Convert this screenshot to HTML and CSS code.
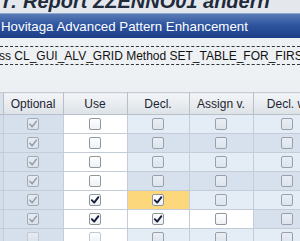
FILE: index.html
```html
<!DOCTYPE html>
<html>
<head>
    <title>Hovitaga Advanced Pattern Enhancement</title>
    <link rel="stylesheet" href="styles.css">
</head>
<body>
    <div class="window-title"><span>r: Report ZZENNO01 ändern</span></div>
    <div class="dialog-title">Hovitaga Advanced Pattern Enhancement</div>
    <div class="pattern-bar">
        <div class="pattern-field">ss CL_GUI_ALV_GRID Method SET_TABLE_FOR_FIRST_DISPLAY</div>
    </div>
    <div class="grid-area">
        <table class="grid">
            <colgroup>
                <col class="c-stub">
                <col class="c-opt">
                <col class="c-use">
                <col class="c-decl">
                <col class="c-assign">
                <col class="c-declw">
            </colgroup>
            <thead>
                <tr>
                    <th class="stub"></th>
                    <th>Optional</th>
                    <th>Use</th>
                    <th>Decl.</th>
                    <th>Assign v.</th>
                    <th>Decl. w</th>
                </tr>
            </thead>
            <tbody id="rows"></tbody>
        </table>
    </div>

    <script>
        // o = optional, u = use, d = decl., a = assign v., w = decl. w
        // 1 = checked; edit = white (editable) cells, focus = current cell
        const rows = [
            { o: 1, u: 0, d: 0, a: 0, w: 0 },
            { o: 1, u: 0, d: 0, a: 0, w: 0 },
            { o: 1, u: 0, d: 0, a: 0, w: 0 },
            { o: 1, u: 0, d: 0, a: 0, w: 0 },
            { o: 1, u: 1, d: 1, a: 0, w: 0, focus: "d" },
            { o: 1, u: 1, d: 1, a: 0, w: 0, edit: ["d", "a"] },
            { o: 0, u: 0, d: 0, a: 0, w: 0, faded: true }
        ];

        const check = '<svg viewBox="0 0 12 12" width="12" height="12"><path d="M2.8 6.2 L5.2 8.6 L9.4 3.2" fill="none" stroke-width="1.9" stroke-linecap="round" stroke-linejoin="round"/></svg>';

        function box(on, kind) {
            return '<span class="cb ' + kind + '">' + (on ? check : '') + '</span>';
        }

        const body = document.getElementById("rows");
        rows.forEach(function (r, i) {
            const tr = document.createElement("tr");
            tr.className = i % 2 ? "even" : "odd";
            const fade = r.faded ? " faded" : "";
            let html = '<td class="stub"></td>';
            html += '<td class="ro">' + box(r.o, "off" + fade) + '</td>';
            html += '<td class="edit">' + box(r.u, "on" + fade) + '</td>';
            ["d", "a", "w"].forEach(function (k) {
                let cls = "";
                if (r.focus === k) cls = "focus";
                else if (r.edit && r.edit.indexOf(k) > -1) cls = "edit";
                html += '<td class="' + cls + '">' + box(r[k], r[k] || cls ? "on" : "plain") + '</td>';
            });
            tr.innerHTML = html;
            body.appendChild(tr);
        });
    </script>
</body>
</html>
```

FILE: styles.css
```css
body {
    margin: 0;
    width: 300px;
    height: 241px;
    overflow: hidden;
    background-color: #e6ebf1;
    font-family: "Liberation Sans", Arial, sans-serif;
}

.window-title {
    height: 13px;
    background-color: #e4e8ed;
    overflow: hidden;
    white-space: nowrap;
}

.window-title span {
    display: block;
    margin-top: -9px;
    margin-left: 3px;
    font-size: 20px;
    font-weight: bold;
    font-style: italic;
    line-height: 21px;
    color: #1f2a3a;
}

.dialog-title {
    height: 25px;
    background: linear-gradient(#5a7cb6, #2f55a0 45%, #1c3e86);
    border-top: 1px solid #8fa6cf;
    box-sizing: border-box;
    color: #fff;
    font-size: 13.3px;
    line-height: 25px;
    padding-left: 1px;
    white-space: nowrap;
}

.pattern-bar {
    background-color: #eef1f4;
    padding: 8px 0 3px 0;
    height: 30px;
    box-sizing: border-box;
}

.pattern-field {
    border-top: 1px dashed #333;
    border-bottom: 1px dashed #333;
    height: 19px;
    box-sizing: border-box;
    padding-top: 2px;
    font-size: 12px;
    line-height: 15px;
    color: #111;
    white-space: nowrap;
    overflow: hidden;
    text-indent: -1px;
}

.grid-area {
    padding-top: 24px;
    background: linear-gradient(#eef1f4, #e3e8ee);
}

.grid {
    border-collapse: collapse;
    table-layout: fixed;
    width: 320px;
    font-size: 12px;
}

.c-stub { width: 3px; }
.c-opt { width: 60px; }
.c-use { width: 64px; }
.c-decl { width: 62px; }
.c-assign { width: 64px; }
.c-declw { width: 67px; }

.grid th {
    height: 21px;
    padding: 0;
    font-weight: normal;
    color: #1e2530;
    background: linear-gradient(#f3f5f7, #dde2e8);
    border: 1px solid #b6bfca;
    border-top-color: #c6cdd6;
    text-align: center;
    white-space: nowrap;
    overflow: hidden;
}

.grid th.stub {
    background: #d8e0ea;
    border-left: none;
}

.grid td {
    height: 18px;
    padding: 0;
    text-align: center;
    border: 1px solid #c3ccd7;
    line-height: 0;
}

.grid tr.odd td { background-color: #e4ecf5; }
.grid tr.even td { background-color: #d6e1ed; }

.grid td.stub {
    border-left: none;
    background-color: #d3dce8 !important;
}

.grid td.ro { background-color: #d5e0ec !important; }
.grid td.edit { background-color: #ffffff !important; }
.grid td.focus { background-color: #fdd77c !important; }

.cb {
    display: inline-block;
    width: 10px;
    height: 10px;
    border: 1px solid #8e969f;
    border-radius: 2px;
    background: linear-gradient(#ffffff, #eef1f4);
    vertical-align: middle;
    position: relative;
}

.cb svg {
    position: absolute;
    left: -1px;
    top: -1px;
}

.cb.on svg path { stroke: #151d38; }

.cb.plain {
    border-color: #98a1ab;
    background: linear-gradient(#e9eef4, #dde4ec);
}

.cb.off {
    border-color: #a1aab5;
    background: linear-gradient(#e6ecf2, #d9e1ea);
}

.cb.off svg path {
    stroke: #939ca8;
    stroke-width: 1.5;
}

.cb.faded {
    border-color: #c2c9d1;
}
```
